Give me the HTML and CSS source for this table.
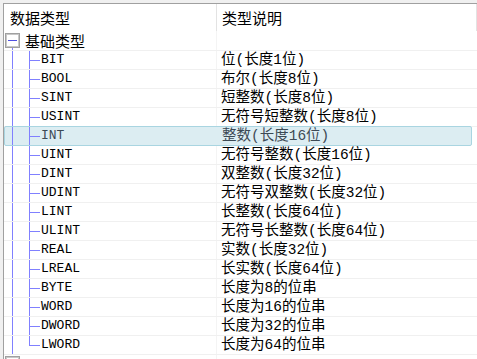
FILE: index.html
```html
<!DOCTYPE html>
<html lang="zh-CN">
<head>
<meta charset="utf-8">
<link rel="stylesheet" href="styles.css">
</head>
<body>
<div class="grid">
  <div class="header">
    <div class="hcell hname">数据类型</div>
    <div class="hcell hdesc">类型说明</div>
  </div>
  <div class="group">
    <div class="gname">
      <svg class="box" width="15" height="15" viewBox="0 0 15 15"><rect x="0.5" y="0.5" width="14" height="14" fill="#c8c8c8" stroke="#a0a0a0"/><rect x="2" y="2" width="11" height="11" fill="#fff"/><rect x="3" y="7" width="9" height="1" fill="#5050e0"/></svg>
      <span class="gtext">基础类型</span>
    </div>
    <div class="desc"></div>
  </div>
  <div class="row"><div class="name">BIT</div><div class="desc">位(长度1位)</div></div>
  <div class="row"><div class="name">BOOL</div><div class="desc">布尔(长度8位)</div></div>
  <div class="row"><div class="name">SINT</div><div class="desc">短整数(长度8位)</div></div>
  <div class="row"><div class="name">USINT</div><div class="desc">无符号短整数(长度8位)</div></div>
  <div class="row selected"><div class="name">INT</div><div class="desc">整数(长度16位)</div></div>
  <div class="row"><div class="name">UINT</div><div class="desc">无符号整数(长度16位)</div></div>
  <div class="row"><div class="name">DINT</div><div class="desc">双整数(长度32位)</div></div>
  <div class="row"><div class="name">UDINT</div><div class="desc">无符号双整数(长度32位)</div></div>
  <div class="row"><div class="name">LINT</div><div class="desc">长整数(长度64位)</div></div>
  <div class="row"><div class="name">ULINT</div><div class="desc">无符号长整数(长度64位)</div></div>
  <div class="row"><div class="name">REAL</div><div class="desc">实数(长度32位)</div></div>
  <div class="row"><div class="name">LREAL</div><div class="desc">长实数(长度64位)</div></div>
  <div class="row"><div class="name">BYTE</div><div class="desc">长度为8的位串</div></div>
  <div class="row"><div class="name">WORD</div><div class="desc">长度为16的位串</div></div>
  <div class="row"><div class="name">DWORD</div><div class="desc">长度为32的位串</div></div>
  <div class="row last"><div class="name">LWORD</div><div class="desc">长度为64的位串</div></div>
  <div class="group next">
    <div class="gname">
      <svg class="box" width="15" height="15" viewBox="0 0 15 15"><rect x="0.5" y="0.5" width="14" height="14" fill="#c8c8c8" stroke="#a0a0a0"/><rect x="2" y="2" width="11" height="11" fill="#fff"/><rect x="3" y="7" width="9" height="1" fill="#5050e0"/><rect x="7" y="3" width="1" height="9" fill="#5050e0"/></svg>
      <span class="gtext">结构体类型</span>
    </div>
    <div class="desc"></div>
  </div>
</div>
</body>
</html>
```
FILE: styles.css
```css
html, body {
  margin: 0;
  padding: 0;
  background: #f0f0f0;
  overflow: hidden;
}
body {
  width: 477px;
  height: 359px;
}
.grid {
  margin: 3px 0 0 3px;
  border-top: 1px solid #a0a0a0;
  border-left: 1px solid #a0a0a0;
  background: #fff;
  height: 400px;
  font-family: "Liberation Mono", "Noto Sans CJK SC", monospace;
  font-size: 14.5px;
  color: #000;
}
.header {
  display: flex;
  height: 27px;
}
.hcell {
  font-family: "Noto Sans CJK SC", sans-serif;
  font-size: 15px;
  line-height: 27px;
  border-right: 1px solid #e3e3e3;
  box-sizing: border-box;
  height: 27px;
}
.hname {
  width: 213px;
  padding-left: 6px;
}
.hdesc {
  flex: 1;
  padding-left: 5px;
}
.group {
  display: flex;
  height: 19px;
  border-bottom: 1px solid #f0f0f0;
}
.gname {
  width: 213px;
  display: flex;
  align-items: center;
  gap: 5px;
  padding-left: 1px;
  box-sizing: border-box;
  border-right: 1px solid #f4f4f4;
  background: linear-gradient(#8080ff, #8080ff) 8px 17px / 1px 3px no-repeat;
}
.next .gname {
  background: none;
  align-items: flex-start;
  padding-top: 1px;
}
.gtext {
  font-family: "Noto Sans CJK SC", sans-serif;
  font-size: 15px;
  line-height: 19px;
}
.box {
  display: block;
  flex: none;
}
.row {
  display: flex;
  height: 18px;
  border-bottom: 1px solid #f0f0f0;
  line-height: 18px;
}
.name {
  width: 213px;
  box-sizing: border-box;
  padding-left: 37px;
  font-family: "Liberation Mono", monospace;
  font-size: 13px;
  border-right: 1px solid #f4f4f4;
  background:
    linear-gradient(#8080ff, #8080ff) 8px 0 / 1px 100% no-repeat,
    linear-gradient(#8080ff, #8080ff) 25px 0 / 1px 100% no-repeat,
    linear-gradient(#8080ff, #8080ff) 26px 9px / 10px 1px no-repeat;
}
.row.last .name {
  background:
    linear-gradient(#8080ff, #8080ff) 8px 0 / 1px 100% no-repeat,
    linear-gradient(#8080ff, #8080ff) 25px 0 / 1px 10px no-repeat,
    linear-gradient(#8080ff, #8080ff) 26px 9px / 10px 1px no-repeat;
}
.desc {
  flex: 1;
  padding-left: 4px;
  white-space: nowrap;
}
.row.selected {
  background: #dcedf2;
  border: 1px solid #a9d5e1;
  border-radius: 2px;
  margin-right: 5px;
  height: 18px;
  margin-top: -1px;
  color: #3c4a55;
}
.row.selected .name {
  border-right-color: transparent;
  padding-left: 36px;
  background:
    linear-gradient(#8080ff, #8080ff) 7px 0 / 1px 100% no-repeat,
    linear-gradient(#8080ff, #8080ff) 24px 0 / 1px 100% no-repeat,
    linear-gradient(#8080ff, #8080ff) 25px 9px / 10px 1px no-repeat;
}
```
